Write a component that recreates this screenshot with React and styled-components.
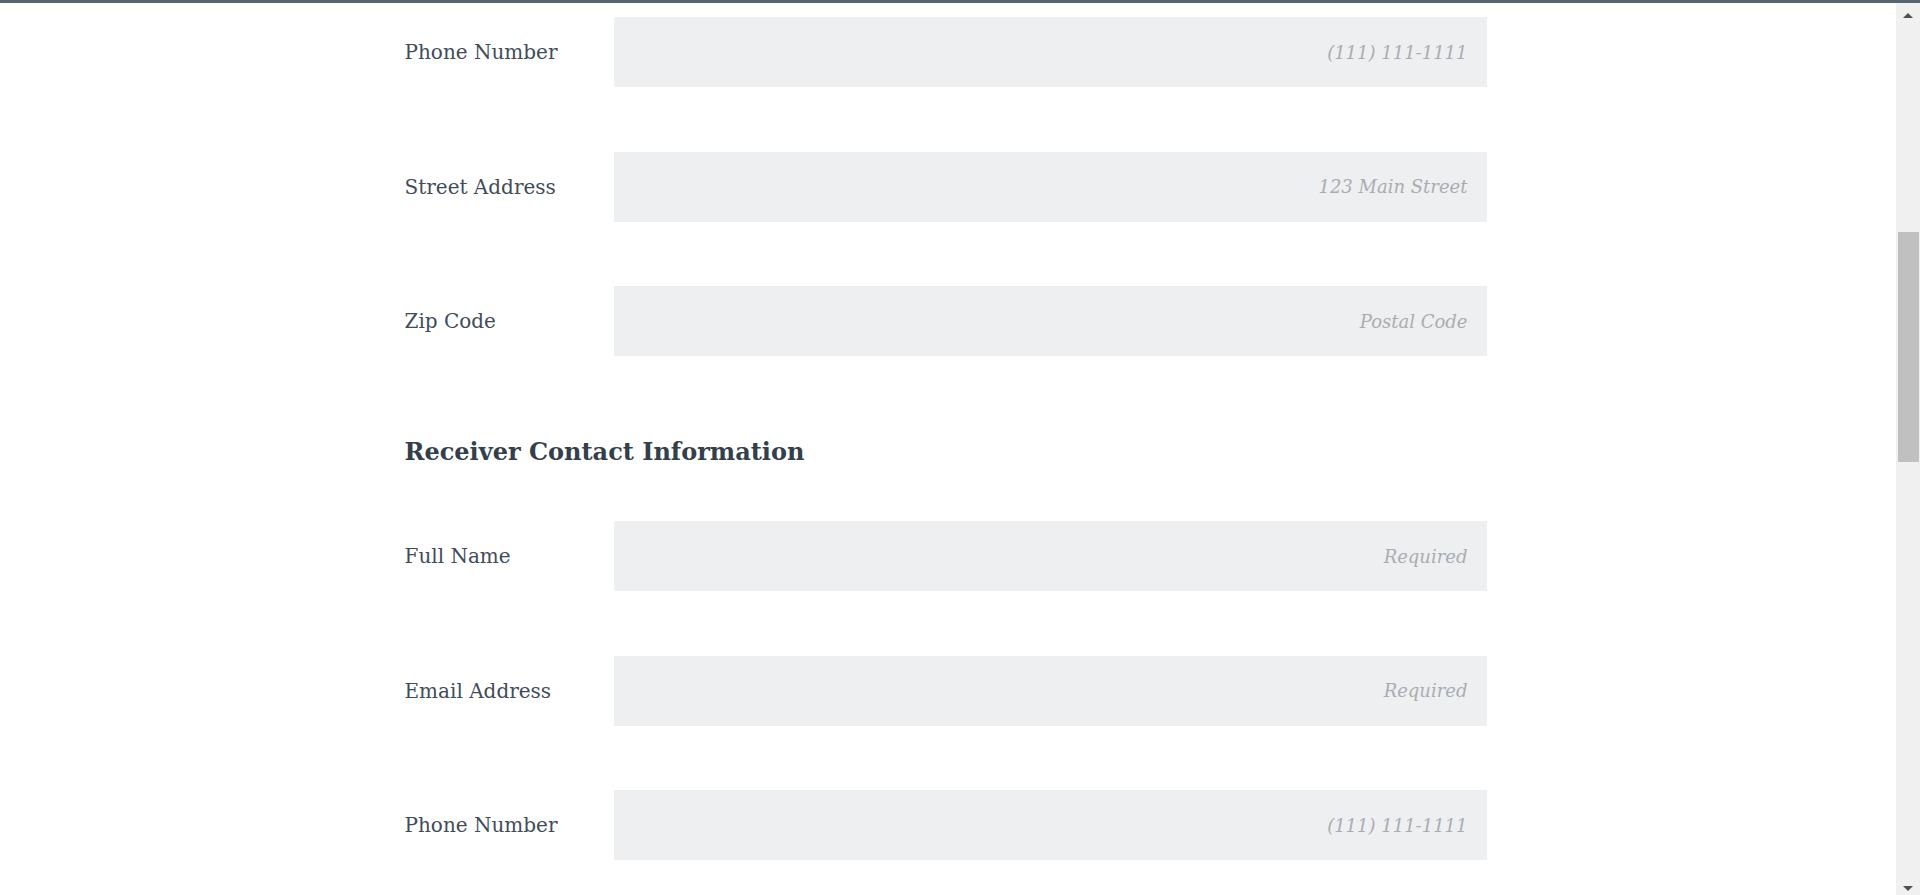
import React, { useLayoutEffect, useRef, useState } from 'react';
import styled, { createGlobalStyle } from 'styled-components';

const GlobalStyle = createGlobalStyle`
  html, body, #root {
    height: 100%;
  }
  body {
    margin: 0;
    background: #ffffff;
    font-family: "DejaVu Serif", "Liberation Serif", serif;
    color: #3b4754;
  }
  * {
    box-sizing: border-box;
  }
`;

export const Shell = styled.div`
  height: 100vh;
  display: flex;
  flex-direction: column;
  border-top: 3px solid #56666e;
`;

export const Body = styled.div`
  flex: 1;
  min-height: 0;
  display: flex;
`;

export const ScrollArea = styled.div`
  position: relative;
  flex: 1;
  min-width: 0;
  overflow-y: scroll;
  background: #ffffff;
  scrollbar-width: none;
  &::-webkit-scrollbar {
    display: none;
  }
`;

export const Scrollbar = styled.div`
  width: 24px;
  flex-shrink: 0;
  display: flex;
  flex-direction: column;
  background: #f0f0f0;
`;

export const ArrowButton = styled.div`
  height: 24px;
  flex-shrink: 0;
  display: flex;
  justify-content: center;
  padding-top: ${(p) => (p.$down ? '15px' : '10px')};
`;

export const Triangle = styled.span`
  width: 0;
  height: 0;
  border-left: 5px solid transparent;
  border-right: 5px solid transparent;
  ${(p) =>
    p.$down ? 'border-top: 5px solid #505050;' : 'border-bottom: 5px solid #505050;'}
`;

export const Track = styled.div`
  flex: 1;
  min-height: 0;
  padding: 0 1px 0 2px;
`;

export const Thumb = styled.div`
  width: 100%;
  background: #c0c0c0;
`;

export const Container = styled.main`
  width: 1087px;
  margin: 0 auto;
  padding: 120px 5px 0 0;
  display: flex;
  flex-direction: column;
`;

export const PageHeader = styled.header`
  display: flex;
  flex-direction: column;
  gap: 24px;
  margin-bottom: 238px;
`;

export const PageTitle = styled.h1`
  margin: 0;
  font-size: 40px;
  line-height: 48px;
  font-weight: 700;
  color: #2f3b47;
`;

export const Intro = styled.p`
  margin: 0;
  font-size: 18px;
  line-height: 30px;
  color: #5a6672;
`;

export const Section = styled.section`
  display: flex;
  flex-direction: column;
  & + & {
    margin-top: 80px;
  }
`;

export const SectionTitle = styled.h2`
  margin: 0 0 53px;
  font-size: 24px;
  line-height: 32px;
  font-weight: 700;
  color: #333f4b;
`;

export const Fields = styled.div`
  display: flex;
  flex-direction: column;
  gap: 64.5px;
`;

export const Row = styled.label`
  display: grid;
  grid-template-columns: 209px 1fr;
  align-items: center;
  height: 70px;
`;

export const Label = styled.span`
  font-size: 20px;
  color: #3f4c59;
`;

export const Input = styled.input`
  height: 70px;
  width: 100%;
  border: 0;
  outline: none;
  background: #eeeff1;
  padding: 0 19px;
  text-align: right;
  font-family: "DejaVu Serif", "Liberation Serif", serif;
  font-size: 18px;
  color: #3d4a57;

  &::placeholder {
    font-style: italic;
    color: #a9adb1;
  }
`;

export const SubmitRow = styled.div`
  display: flex;
  justify-content: flex-end;
  margin-top: 80px;
  padding-bottom: 581px;
`;

export const SubmitButton = styled.button`
  height: 60px;
  padding: 0 48px;
  border: 0;
  background: #56666e;
  color: #ffffff;
  font-family: "DejaVu Serif", "Liberation Serif", serif;
  font-size: 18px;
  cursor: pointer;
`;

const sender = [
  { label: 'Full Name', placeholder: 'Required' },
  { label: 'Email Address', placeholder: 'Required' },
  { label: 'Phone Number', placeholder: '(111) 111-1111', anchor: true },
  { label: 'Street Address', placeholder: '123 Main Street' },
  { label: 'Zip Code', placeholder: 'Postal Code' },
];

const receiver = [
  { label: 'Full Name', placeholder: 'Required' },
  { label: 'Email Address', placeholder: 'Required' },
  { label: 'Phone Number', placeholder: '(111) 111-1111' },
  { label: 'Street Address', placeholder: '123 Main Street' },
  { label: 'Zip Code', placeholder: 'Postal Code' },
];

const parcel = [
  { label: 'Weight', placeholder: 'lbs' },
  { label: 'Length', placeholder: 'in' },
  { label: 'Width', placeholder: 'in' },
  { label: 'Height', placeholder: 'in' },
];

function FieldSection({ title, fields, anchorRef }) {
  return (
    <Section>
      <SectionTitle>{title}</SectionTitle>
      <Fields>
        {fields.map((f) => (
          <Row key={f.label} ref={f.anchor ? anchorRef : undefined}>
            <Label>{f.label}</Label>
            <Input type="text" placeholder={f.placeholder} />
          </Row>
        ))}
      </Fields>
    </Section>
  );
}

export default function App() {
  const areaRef = useRef(null);
  const anchorRef = useRef(null);
  const trackRef = useRef(null);
  const [thumb, setThumb] = useState({ top: 0, height: 0 });

  const measure = () => {
    const area = areaRef.current;
    const track = trackRef.current;
    if (!area || !track) return;
    const trackLen = track.clientHeight;
    const height = Math.max(20, (area.clientHeight / area.scrollHeight) * trackLen);
    const range = area.scrollHeight - area.clientHeight;
    const top = range > 0 ? (area.scrollTop / range) * (trackLen - height) : 0;
    setThumb({ top, height });
  };

  useLayoutEffect(() => {
    if (areaRef.current && anchorRef.current) {
      areaRef.current.scrollTop = anchorRef.current.offsetTop - 14;
    }
    measure();
  }, []);

  return (
    <>
      <GlobalStyle />
      <Shell>
        <Body>
          <ScrollArea ref={areaRef} onScroll={measure}>
            <Container>
              <PageHeader>
                <PageTitle>Ship a Package</PageTitle>
                <Intro>
                  Fill in the sender and receiver details below and we will
                  prepare a shipping label for you.
                </Intro>
              </PageHeader>
              <FieldSection
                title="Sender Contact Information"
                fields={sender}
                anchorRef={anchorRef}
              />
              <FieldSection title="Receiver Contact Information" fields={receiver} />
              <FieldSection title="Package Details" fields={parcel} />
              <SubmitRow>
                <SubmitButton type="submit">Continue</SubmitButton>
              </SubmitRow>
            </Container>
          </ScrollArea>
          <Scrollbar aria-hidden="true">
            <ArrowButton>
              <Triangle />
            </ArrowButton>
            <Track ref={trackRef}>
              <Thumb style={{ marginTop: thumb.top, height: thumb.height }} />
            </Track>
            <ArrowButton $down>
              <Triangle $down />
            </ArrowButton>
          </Scrollbar>
        </Body>
      </Shell>
    </>
  );
}
